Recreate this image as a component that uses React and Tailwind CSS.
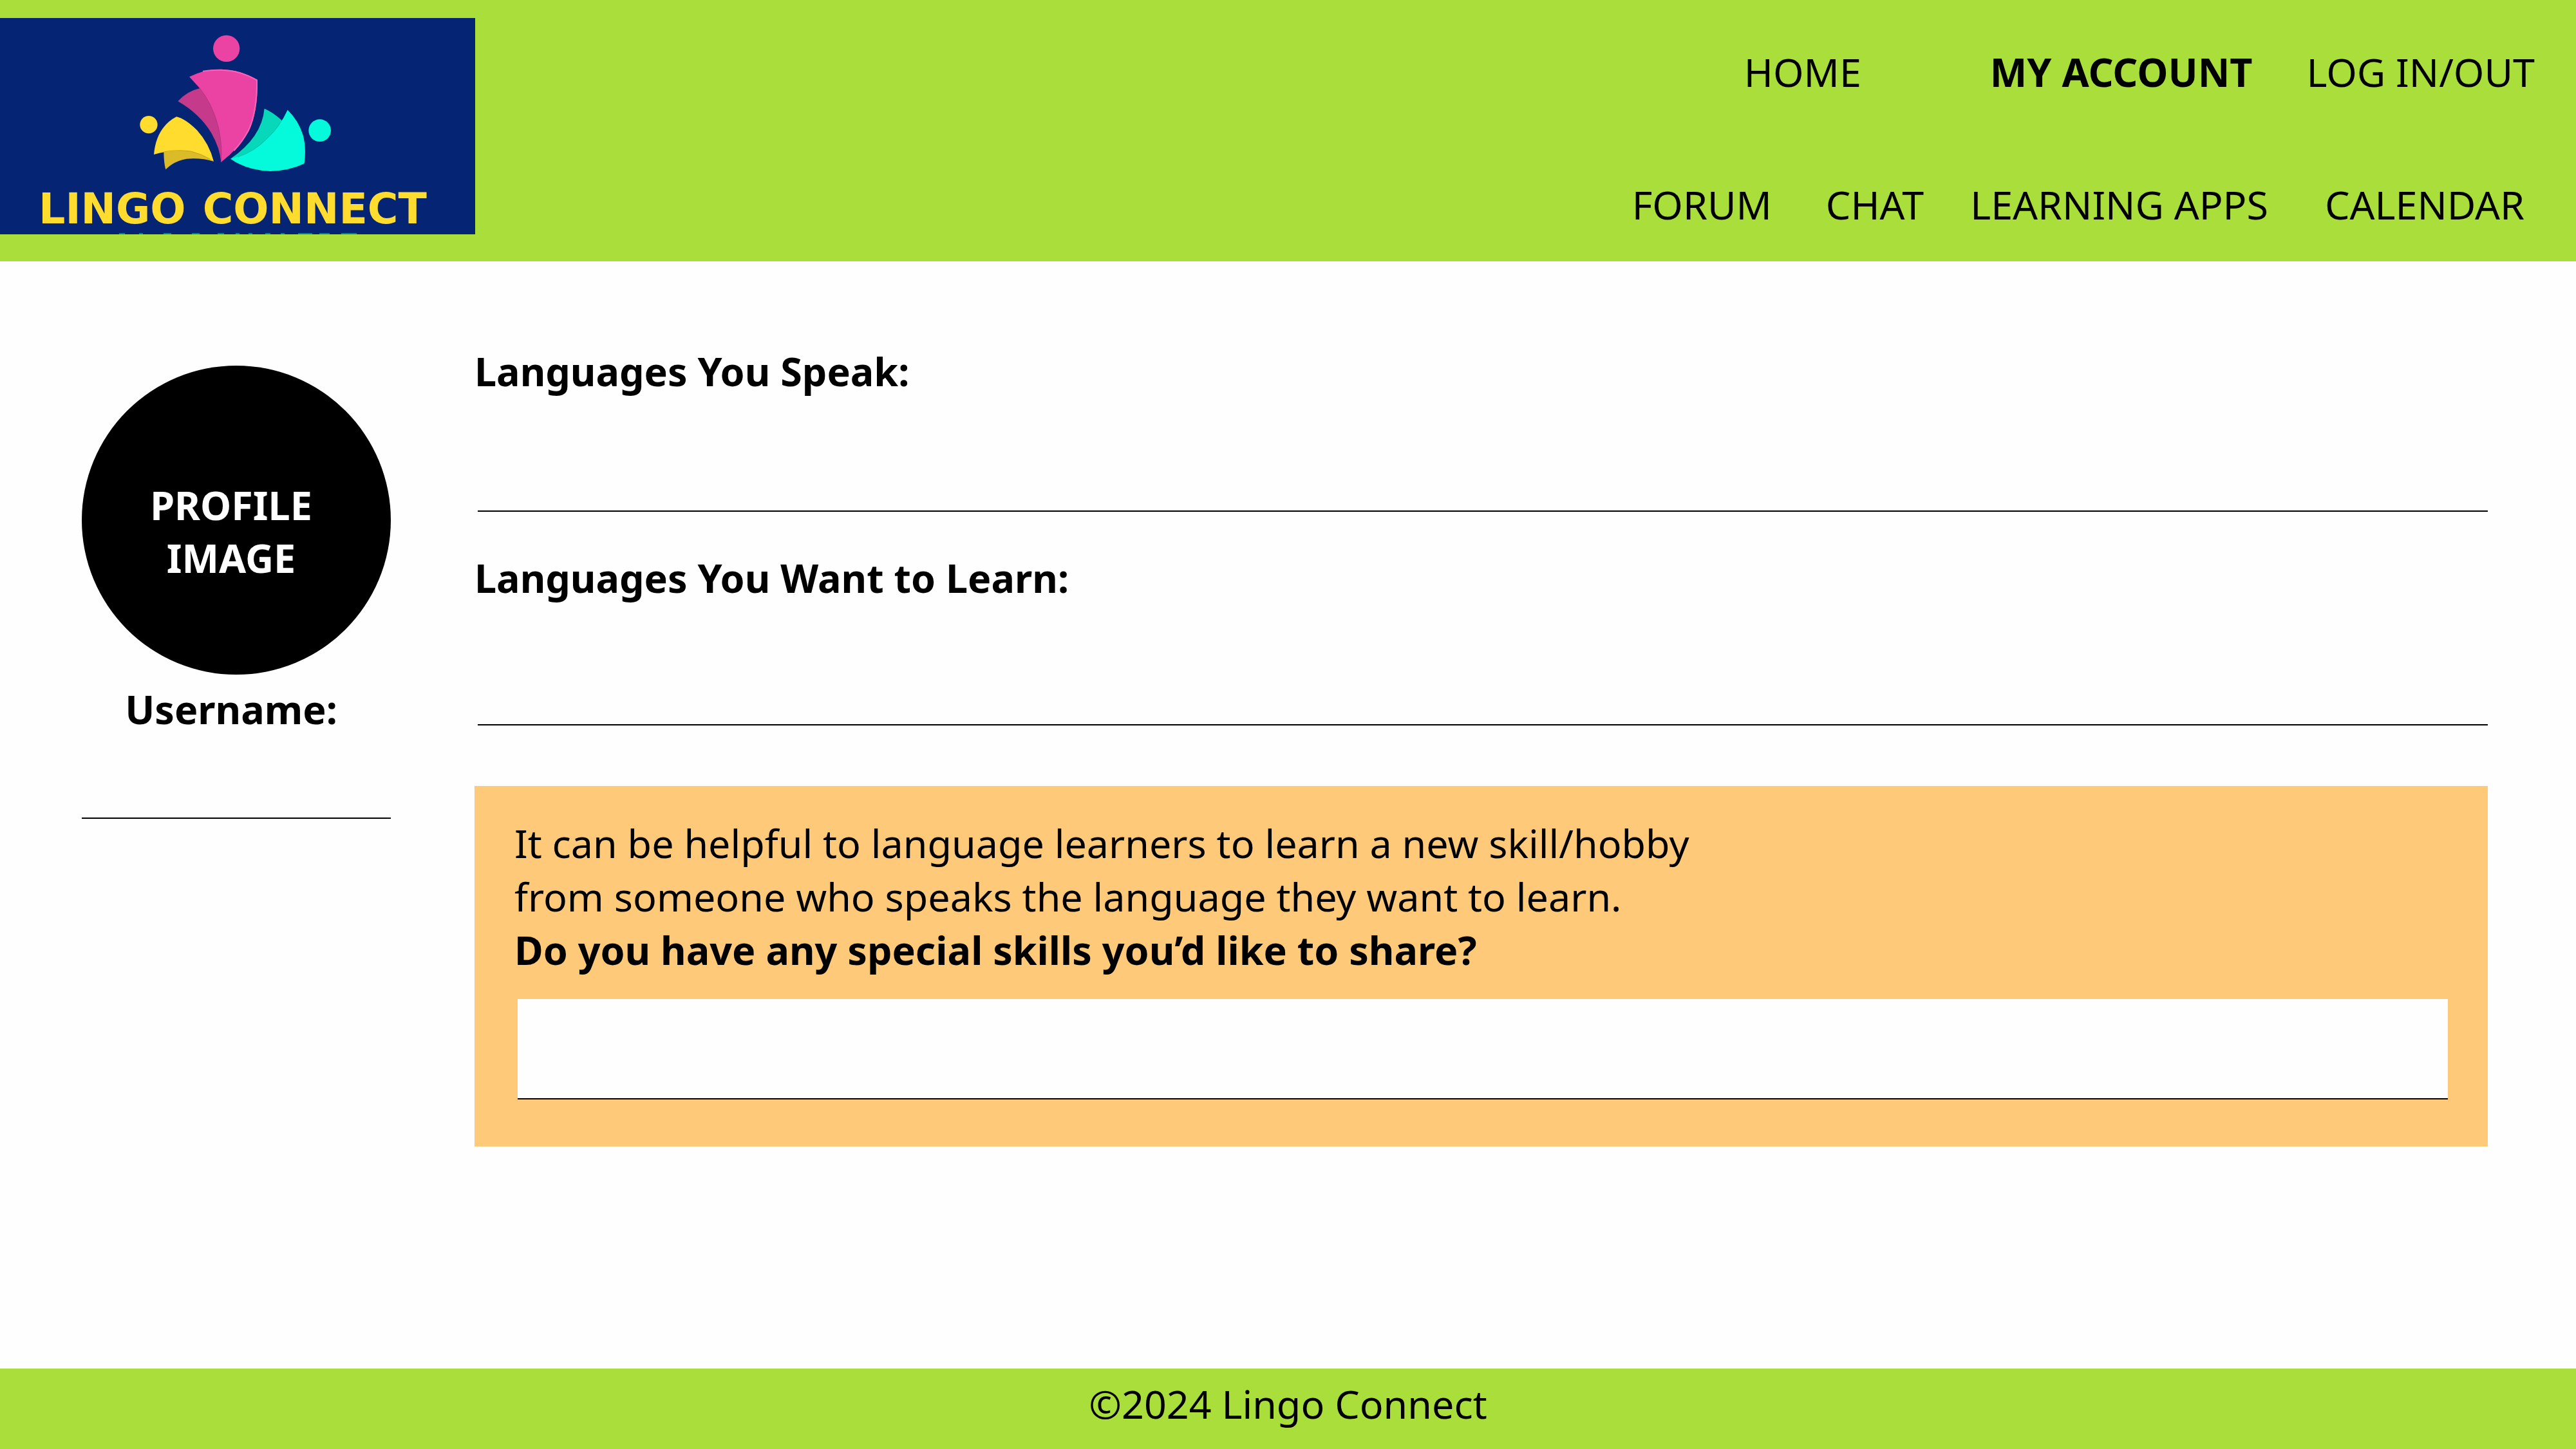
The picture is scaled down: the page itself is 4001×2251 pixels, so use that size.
import React from "react";

const topLinks = [
  { label: "HOME", className: "mr-[200px]" },
  { label: "MY ACCOUNT", className: "mr-[84px] font-bold", current: true },
  { label: "LOG IN/OUT", className: "" },
];

const bottomLinks = [
  { label: "FORUM", className: "mr-[84px]" },
  { label: "CHAT", className: "mr-[72px]" },
  { label: "LEARNING APPS", className: "mr-[88px]" },
  { label: "CALENDAR", className: "" },
];

function NavRow({ links, className }) {
  return (
    <ul className={className}>
      {links.map((link) => (
        <li key={link.label} className={link.className}>
          <a href="#" aria-current={link.current ? "page" : undefined}>
            {link.label}
          </a>
        </li>
      ))}
    </ul>
  );
}

function Logo() {
  return (
    <a
      href="#"
      aria-label="Lingo Connect"
      className="flex w-[738px] shrink-0 flex-col overflow-hidden bg-[#052474]"
    >
      <svg viewBox="-600 -36 2214 777" className="h-[259px] w-full" aria-hidden="true">
        <circle cx="455" cy="106" r="62" fill="#ea43a4" />
        <path
          d="M332 291Q270 305 229 352Q330 410 385 500Q425 570 430 636L450 560L420 380Z"
          fill="#c63a8c"
        />
        <path
          d="M282 238Q350 203 430 203Q520 205 600 252Q602 400 560 490Q510 575 430 636Q437 560 417 470Q390 365 330 290Z"
          fill="#ea43a4"
        />
        <path
          d="M345 212Q385 205 430 206Q520 208 597 254Q599 400 557 489Q530 540 490 582"
          fill="none"
          stroke="#fb62bb"
          strokeWidth="6"
        />
        <path
          d="M330 290Q390 365 417 470Q437 560 430 636"
          fill="none"
          stroke="#b5347f"
          strokeWidth="3"
        />
        <circle cx="93" cy="461" r="41" fill="#ffdc2e" />
        <path
          d="M163 580Q240 565 300 580Q355 600 394 632Q340 615 270 620Q210 630 172 670Q163 640 163 580Z"
          fill="#dcbb29"
        />
        <path
          d="M222 424Q262 432 318 487Q375 550 396 633Q350 600 290 585Q210 574 117 600Q128 474 222 424Z"
          fill="#ffdc2e"
        />
        <path d="M163 588Q220 576 290 585Q340 598 380 622" fill="none" stroke="#c4a51f" strokeWidth="3" />
        <circle cx="890" cy="488" r="52" fill="#04fadb" />
        <path
          d="M632 386Q675 405 712 440L700 510L560 620L474 620Q620 520 632 386Z"
          fill="#08d8ba"
        />
        <path
          d="M740 392Q790 440 812 510Q828 570 818 642Q750 675 660 678Q550 674 474 620Q575 595 640 530Q705 470 740 392Z"
          fill="#04fadb"
        />
        <path d="M508 611Q582 588 640 530Q684 490 709 447" fill="none" stroke="#06bda5" strokeWidth="3" />
      </svg>
      <div className="flex gap-[26px] pl-[60px] font-['DejaVu_Sans',sans-serif] text-[65px] leading-[75px] font-bold text-[#ffdc2e]">
        <span>LINGO</span>
        <span>CONNECT</span>
      </div>
      <svg viewBox="0 0 738 2" className="h-[2px] w-full" aria-hidden="true">
        <path
          d="M185 1h9M216 1h6M254 1h12M298 1h12M338 1h10M366 1h6M386 1h6M412 1h8M436 1h6M463 1h22M496 1h16M530 1h24"
          stroke="#0b7f9c"
          strokeWidth="2"
        />
      </svg>
    </a>
  );
}

function LineField({ id, label, fieldClass }) {
  return (
    <div className="flex flex-col">
      <label htmlFor={id} className="leading-[84px] font-bold">
        {label}
      </label>
      <input
        id={id}
        type="text"
        className={`ml-[5px] border-b-2 border-black bg-transparent outline-none ${fieldClass}`}
      />
    </div>
  );
}

export default function App() {
  return (
    <div className="flex min-h-screen flex-col bg-[#fefefe] font-['Noto_Sans','Open_Sans',sans-serif] text-[61px] text-black">
      <header className="flex items-start justify-between bg-[#a9de3b] pt-[28px] pb-[42px]">
        <Logo />
        <nav aria-label="Main" className="flex flex-col gap-[122px] pt-[42px] leading-[84px]">
          <NavRow links={topLinks} className="flex justify-end pr-[64px]" />
          <NavRow links={bottomLinks} className="flex justify-end pr-[80px]" />
        </nav>
      </header>

      <main className="flex grow items-start gap-[130px] pt-[129px] pr-[137px] pl-[127px]">
        <aside className="flex w-[480px] shrink-0 flex-col pt-[33px]">
          <div className="flex aspect-square w-full items-center justify-center rounded-full bg-black pt-[36px] pr-[16px] text-center leading-[82px] font-bold text-white">
            <p>
              PROFILE
              <br />
              IMAGE
            </p>
          </div>
          <label htmlFor="username" className="mt-[12px] pr-[16px] text-center leading-[84px] font-bold">
            Username:
          </label>
          <input
            id="username"
            type="text"
            className="h-[128px] w-full border-b-2 border-black bg-transparent outline-none"
          />
        </aside>

        <form className="flex min-w-0 flex-1 flex-col">
          <LineField id="speak" label="Languages You Speak:" fieldClass="h-[176px]" />
          <div className="mt-[61px]">
            <LineField id="learn" label="Languages You Want to Learn:" fieldClass="h-[187px]" />
          </div>
          <section className="mt-[94px] flex flex-col bg-[#feca7a] px-[62px] pt-[47px] pb-[73px] leading-[83px]">
            <p>
              It can be helpful to language learners to learn a new skill/hobby
              <br />
              from someone who speaks the language they want to learn.
            </p>
            <label htmlFor="skills" className="font-bold">
              Do you have any special skills you’d like to share?
            </label>
            <input
              id="skills"
              type="text"
              className="mt-[35px] ml-[5px] h-[156px] border-b-2 border-black bg-[#fefefe] outline-none"
            />
          </section>
        </form>
      </main>

      <footer className="bg-[#a9de3b] pt-[13px] pb-[28px] text-center leading-[84px]">
        ©2024 Lingo Connect
      </footer>
    </div>
  );
}
